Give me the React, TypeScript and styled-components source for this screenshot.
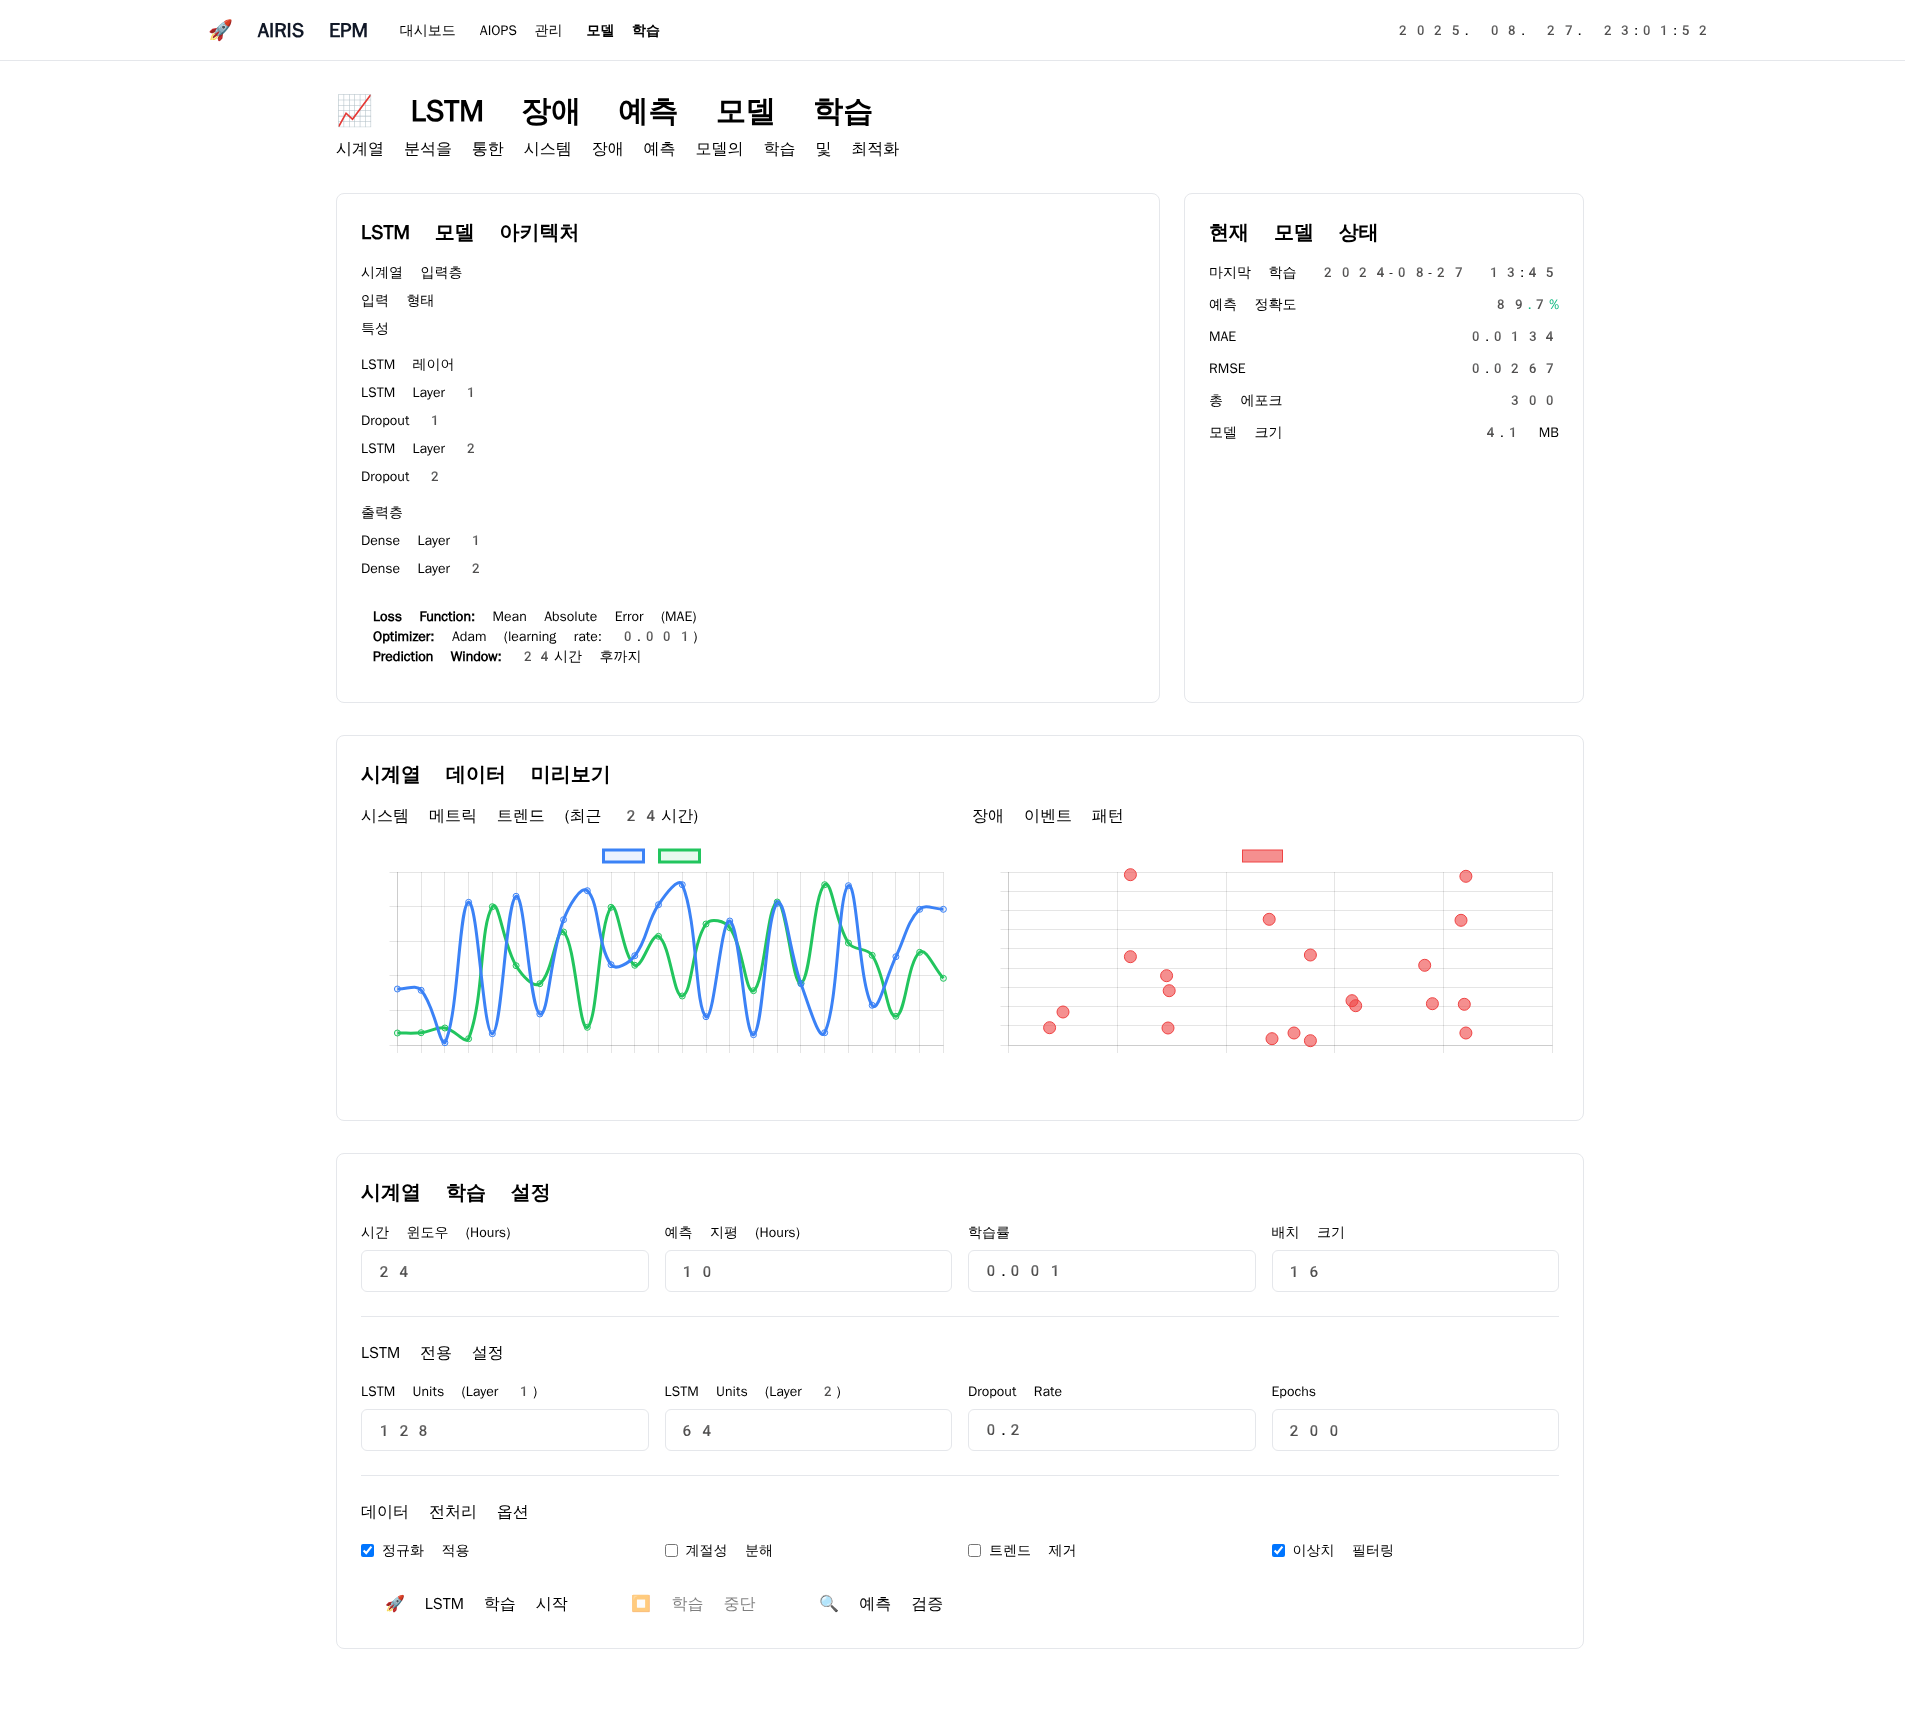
import React from 'react';
import styled, { createGlobalStyle } from 'styled-components';

const BORDER = '#e5e7eb';
const BLUE = '#3b82f6';
const GREEN = '#22c55e';
const RED = '#ef4444';

const GlobalStyle = createGlobalStyle`
  *, *::before, *::after { box-sizing: border-box; }
  body {
    margin: 0;
    background: #fff;
    color: #000;
    font-family: "Noto Color Emoji", "WenQuanYi Zen Hei", "Noto Sans CJK KR", sans-serif;
    font-size: 16px;
    line-height: 24px;
  }
  h1, h2, h3, p, dl, dd, ul { margin: 0; padding: 0; }
  button, input { font: inherit; color: inherit; }
`;

const TopBar = styled.header`
  border-bottom: 1px solid ${BORDER};
  padding-left: 15px;
`;

const TopBarInner = styled.div`
  max-width: 1536px;
  height: 60px;
  margin: 0 auto;
  padding: 0 16px;
  display: flex;
  align-items: center;
  justify-content: space-between;
`;

const BrandGroup = styled.div`
  display: flex;
  align-items: center;
  gap: 32px;
`;

const Brand = styled.a`
  color: #111827;
  font-size: 20px;
  line-height: 28px;
  font-weight: 800;
  text-decoration: none;
`;

const Nav = styled.nav`
  display: flex;
  gap: 24px;
`;

const NavLink = styled.a<{ $active?: boolean }>`
  color: inherit;
  font-size: 14px;
  line-height: 20px;
  font-weight: ${(p) => (p.$active ? 800 : 400)};
  text-decoration: none;
`;

const Clock = styled.time`
  font-size: 14px;
  line-height: 20px;
`;

const Page = styled.div`
  padding-left: 15px;
`;

const Main = styled.main`
  max-width: 1280px;
  margin: 0 auto;
  padding: 32px 16px;
  display: flex;
  flex-direction: column;
  gap: 32px;
`;

const PageTitle = styled.h1`
  margin-bottom: 8px;
  font-size: 30px;
  line-height: 36px;
  font-weight: 800;
`;

const TopGrid = styled.div`
  display: grid;
  grid-template-columns: repeat(3, minmax(0, 1fr));
  gap: 24px;
  & > :first-child { grid-column: span 2; }
`;

const Card = styled.section`
  border: 1px solid ${BORDER};
  border-radius: 8px;
  padding: 24px;
`;

const CardTitle = styled.h2`
  margin-bottom: 16px;
  font-size: 20px;
  line-height: 28px;
  font-weight: 800;
`;

const LayerGroups = styled.div`
  display: flex;
  flex-direction: column;
  gap: 16px;
`;

const LayerList = styled.ul`
  list-style: none;
  display: flex;
  flex-direction: column;
  gap: 8px;
  font-size: 14px;
  line-height: 20px;
`;

const ModelNotes = styled.div`
  margin-top: 16px;
  padding: 12px;
  font-size: 14px;
  line-height: 20px;
  strong { font-weight: 800; }
`;

const StatusList = styled.dl`
  display: flex;
  flex-direction: column;
  gap: 12px;
  font-size: 14px;
  line-height: 20px;
`;

const StatusRow = styled.div`
  display: flex;
  justify-content: space-between;
`;

const StatusValue = styled.dd<{ $good?: boolean }>`
  color: ${(p) => (p.$good ? '#10b981' : 'inherit')};
`;

const ChartGrid = styled.div`
  display: grid;
  grid-template-columns: repeat(2, minmax(0, 1fr));
  gap: 24px;
`;

const SubTitle = styled.h3<{ $space: number }>`
  margin-bottom: ${(p) => p.$space}px;
  font-size: 16px;
  line-height: 24px;
  font-weight: 400;
`;

const ChartSvg = styled.svg`
  display: block;
  width: 100%;
  height: auto;
`;

const FormGrid = styled.div`
  display: grid;
  grid-template-columns: repeat(4, minmax(0, 1fr));
  gap: 16px;
`;

const FieldBox = styled.div`
  display: flex;
  flex-direction: column;
  gap: 8px;
`;

const FieldLabel = styled.label`
  font-size: 14px;
  line-height: 20px;
`;

const NumberInput = styled.input`
  width: 100%;
  height: 42px;
  padding: 8px 12px;
  border: 1px solid ${BORDER};
  border-radius: 6px;
  background: #fff;
`;

const Divided = styled.div`
  margin-top: 24px;
  padding-top: 24px;
  border-top: 1px solid ${BORDER};
`;

const CheckLabel = styled.label`
  display: flex;
  align-items: center;
  gap: 8px;
  font-size: 14px;
  line-height: 20px;
`;

const CheckBox = styled.input`
  width: 13px;
  height: 13px;
  margin: 0;
`;

const Actions = styled.div`
  display: flex;
  flex-wrap: wrap;
  gap: 16px;
  margin-top: 24px;
`;

const ActionButton = styled.button`
  padding: 8px 24px;
  border: 0;
  border-radius: 6px;
  background: transparent;
  line-height: 24px;
  cursor: pointer;
  &:disabled { opacity: 0.5; cursor: not-allowed; }
`;

/* ---------- charts ---------- */

type Pt = { x: number; y: number };

const CHART = { width: 587, height: 256, left: 36.4, top: 32, bottom: 205, tick: 8 };

const cpuLevels = [149, 150.3, 202.7, 62.3, 193.7, 56.3, 174, 79.7, 50.7, 124.7, 115.7, 64.7, 44.7, 176.7, 81, 194.7, 63.3, 143.7, 192.7, 45.7, 165.3, 116.7, 69.3, 69.3];
const memoryLevels = [193, 192.7, 188, 198.7, 66.7, 125.7, 143.7, 92, 187.3, 67.3, 125.3, 96.3, 156, 84, 87.7, 150.7, 62, 143.3, 44.7, 103, 115.3, 176.3, 112.3, 138.3];

const incidents: Pt[] = [
  [158.4, 34.7], [158.4, 116.7], [194.6, 135.7], [197.2, 150.7], [196, 188], [91, 172],
  [77.6, 187.7], [297.2, 79.3], [338.4, 115], [300, 198.7], [322, 193], [338.4, 200.7],
  [380, 160.7], [383.7, 165.7], [452.7, 125.3], [460.4, 163.7], [489, 80.3], [493.9, 36.3],
  [492.3, 164.3], [493.9, 193],
].map(([x, y]) => ({ x, y }));

/** Cubic spline through the points, control points kept inside the plot area. */
function splinePath(pts: Pt[], tension: number) {
  const clamp = (y: number) => Math.min(CHART.bottom, Math.max(CHART.top, y));
  const controls = pts.map((cur, i) => {
    const prev = pts[i - 1] ?? cur;
    const next = pts[i + 1] ?? cur;
    const d01 = Math.hypot(cur.x - prev.x, cur.y - prev.y);
    const d12 = Math.hypot(next.x - cur.x, next.y - cur.y);
    const fa = (tension * d01) / (d01 + d12);
    const fb = (tension * d12) / (d01 + d12);
    return {
      before: { x: cur.x - fa * (next.x - prev.x), y: clamp(cur.y - fa * (next.y - prev.y)) },
      after: { x: cur.x + fb * (next.x - prev.x), y: clamp(cur.y + fb * (next.y - prev.y)) },
    };
  });
  return pts.reduce((d, p, i) => {
    if (i === 0) return `M${p.x},${p.y}`;
    const a = controls[i - 1].after;
    const b = controls[i].before;
    return `${d} C${a.x},${a.y} ${b.x},${b.y} ${p.x},${p.y}`;
  }, '');
}

/** Spreads count + 1 lines over a range, each on the middle of a pixel. */
const lineStops = (from: number, to: number, count: number) =>
  Array.from({ length: count + 1 }, (_, i) => Math.floor(from + ((to - from) * i) / count) + 0.5);

function Grid({ right, cols, rows }: { right: number; cols: number; rows: number }) {
  const { left, top, bottom, tick } = CHART;
  const xs = lineStops(left, right, cols);
  const ys = lineStops(top, bottom, rows);
  return (
    <g stroke="rgba(0,0,0,0.1)" strokeWidth={1}>
      {xs.map((x) => <line key={`x${x}`} x1={x} x2={x} y1={top} y2={bottom + tick} />)}
      {ys.map((y) => <line key={`y${y}`} x1={xs[0] - tick} x2={right} y1={y} y2={y} />)}
      <line x1={xs[0]} x2={xs[0]} y1={top} y2={bottom} />
      <line x1={xs[0]} x2={right} y1={bottom + 0.5} y2={bottom + 0.5} />
    </g>
  );
}

function Series({ levels, right, color, fill }: { levels: number[]; right: number; color: string; fill: string }) {
  const step = (right - CHART.left) / (levels.length - 1);
  const pts = levels.map((y, i) => ({ x: CHART.left + step * i, y }));
  return (
    <g stroke={color}>
      <path d={splinePath(pts, 0.4)} fill="none" strokeWidth={3} />
      {pts.map((p) => <circle key={p.x} cx={p.x} cy={p.y} r={3} fill={fill} strokeWidth={1} />)}
    </g>
  );
}

function TrendChart() {
  const right = 582.4;
  return (
    <ChartSvg viewBox={`0 0 ${CHART.width} ${CHART.height}`} role="img" aria-label="시스템 메트릭 트렌드">
      <rect x={242.5} y={10} width={40} height={12} fill="rgba(59,130,246,0.1)" stroke={BLUE} strokeWidth={3} />
      <rect x={298.5} y={10} width={40} height={12} fill="rgba(34,197,94,0.1)" stroke={GREEN} strokeWidth={3} />
      <Grid right={right} cols={23} rows={5} />
      <Series levels={memoryLevels} right={right} color={GREEN} fill="rgba(34,197,94,0.1)" />
      <Series levels={cpuLevels} right={right} color={BLUE} fill="rgba(59,130,246,0.1)" />
    </ChartSvg>
  );
}

function IncidentChart() {
  return (
    <ChartSvg viewBox={`0 0 ${CHART.width} ${CHART.height}`} role="img" aria-label="장애 이벤트 패턴">
      <rect x={270.5} y={10} width={40} height={12} fill="rgba(239,68,68,0.6)" stroke={RED} />
      <Grid right={580.4} cols={5} rows={9} />
      {incidents.map((p, i) => (
        <circle key={i} cx={p.x} cy={p.y} r={6} fill="rgba(239,68,68,0.6)" stroke={RED} />
      ))}
    </ChartSvg>
  );
}

/* ---------- form parts ---------- */

function Field({ id, label, value }: { id: string; label: string; value: string }) {
  return (
    <FieldBox>
      <FieldLabel htmlFor={id}>{label}</FieldLabel>
      <NumberInput id={id} type="number" step="any" defaultValue={value} />
    </FieldBox>
  );
}

function Check({ id, label, checked }: { id: string; label: string; checked?: boolean }) {
  return (
    <CheckLabel htmlFor={id}>
      <CheckBox id={id} type="checkbox" defaultChecked={checked} />
      <span>{label}</span>
    </CheckLabel>
  );
}

const layers = [
  ['시계열 입력층', '입력 형태', '특성'],
  ['LSTM 레이어', 'LSTM Layer 1', 'Dropout 1', 'LSTM Layer 2', 'Dropout 2'],
  ['출력층', 'Dense Layer 1', 'Dense Layer 2'],
];

const status: { label: string; value: string; good?: boolean }[] = [
  { label: '마지막 학습', value: '2024-08-27 13:45' },
  { label: '예측 정확도', value: '89.7%', good: true },
  { label: 'MAE', value: '0.0134' },
  { label: 'RMSE', value: '0.0267' },
  { label: '총 에포크', value: '300' },
  { label: '모델 크기', value: '4.1 MB' },
];

export default function App() {
  return (
    <>
      <GlobalStyle />
      <TopBar>
        <TopBarInner>
          <BrandGroup>
            <Brand href="#">🚀 AIRIS EPM</Brand>
            <Nav>
              <NavLink href="#dashboard">대시보드</NavLink>
              <NavLink href="#aiops">AIOPS 관리</NavLink>
              <NavLink href="#training" $active>모델 학습</NavLink>
            </Nav>
          </BrandGroup>
          <Clock>2025. 08. 27. 23:01:52</Clock>
        </TopBarInner>
      </TopBar>
      <Page>
        <Main>
          <div>
            <PageTitle>📈 LSTM 장애 예측 모델 학습</PageTitle>
            <p>시계열 분석을 통한 시스템 장애 예측 모델의 학습 및 최적화</p>
          </div>

          <TopGrid>
            <Card>
              <CardTitle>LSTM 모델 아키텍처</CardTitle>
              <LayerGroups>
                {layers.map((group) => (
                  <LayerList key={group[0]}>
                    {group.map((name) => <li key={name}>{name}</li>)}
                  </LayerList>
                ))}
              </LayerGroups>
              <ModelNotes>
                <p><strong>Loss Function:</strong> Mean Absolute Error (MAE)</p>
                <p><strong>Optimizer:</strong> Adam (learning rate: 0.001)</p>
                <p><strong>Prediction Window:</strong> 24시간 후까지</p>
              </ModelNotes>
            </Card>
            <Card>
              <CardTitle>현재 모델 상태</CardTitle>
              <StatusList>
                {status.map((s) => (
                  <StatusRow key={s.label}>
                    <dt>{s.label}</dt>
                    <StatusValue $good={s.good}>{s.value}</StatusValue>
                  </StatusRow>
                ))}
              </StatusList>
            </Card>
          </TopGrid>

          <Card>
            <CardTitle>시계열 데이터 미리보기</CardTitle>
            <ChartGrid>
              <div>
                <SubTitle $space={12}>시스템 메트릭 트렌드 (최근 24시간)</SubTitle>
                <TrendChart />
              </div>
              <div>
                <SubTitle $space={12}>장애 이벤트 패턴</SubTitle>
                <IncidentChart />
              </div>
            </ChartGrid>
          </Card>

          <Card>
            <CardTitle>시계열 학습 설정</CardTitle>
            <FormGrid>
              <Field id="window" label="시간 윈도우 (Hours)" value="24" />
              <Field id="horizon" label="예측 지평 (Hours)" value="10" />
              <Field id="rate" label="학습률" value="0.001" />
              <Field id="batch" label="배치 크기" value="16" />
            </FormGrid>
            <Divided>
              <SubTitle $space={16}>LSTM 전용 설정</SubTitle>
              <FormGrid>
                <Field id="units1" label="LSTM Units (Layer 1)" value="128" />
                <Field id="units2" label="LSTM Units (Layer 2)" value="64" />
                <Field id="dropout" label="Dropout Rate" value="0.2" />
                <Field id="epochs" label="Epochs" value="200" />
              </FormGrid>
            </Divided>
            <Divided>
              <SubTitle $space={16}>데이터 전처리 옵션</SubTitle>
              <FormGrid>
                <Check id="normalize" label="정규화 적용" checked />
                <Check id="seasonal" label="계절성 분해" />
                <Check id="detrend" label="트렌드 제거" />
                <Check id="outliers" label="이상치 필터링" checked />
              </FormGrid>
            </Divided>
            <Actions>
              <ActionButton type="button">🚀 LSTM 학습 시작</ActionButton>
              <ActionButton type="button" disabled>⏹️ 학습 중단</ActionButton>
              <ActionButton type="button">🔍 예측 검증</ActionButton>
            </Actions>
          </Card>
        </Main>
      </Page>
    </>
  );
}
